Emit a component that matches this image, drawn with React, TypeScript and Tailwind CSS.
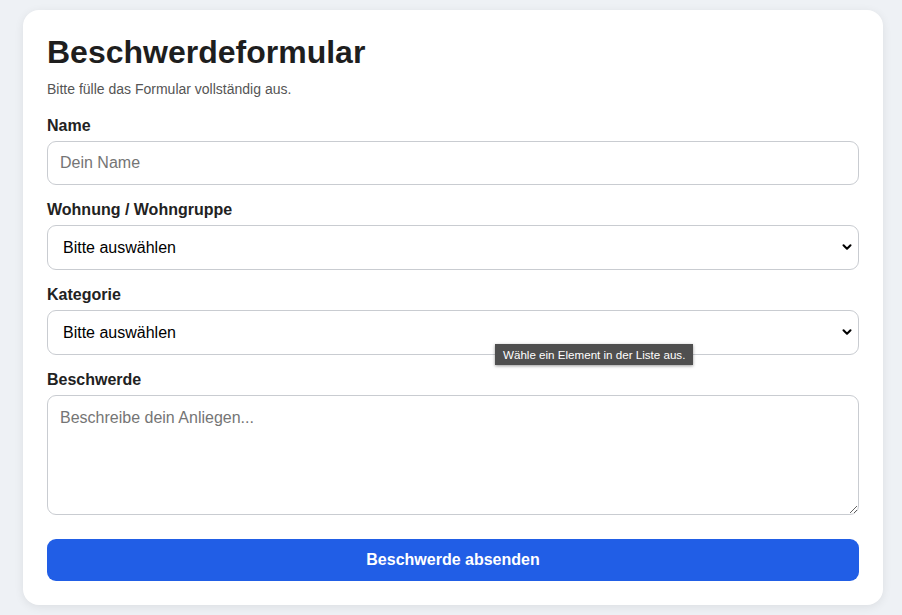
import { ChevronDown } from 'lucide-react';

const font = { fontFamily: '"Liberation Sans", Arial, sans-serif' };

// Select mit eigenem Pfeil
function SelectField({ label }: { label: string }) {
  return (
    <div className="mt-[15px]">
      <label className="block text-[16px] font-bold leading-[20px] text-[#222]">{label}</label>
      <div className="relative mt-[5px]">
        <select className="h-[45px] w-full appearance-none rounded-[9px] border border-[#c9ccd1] bg-white pl-[15px] text-[16px] text-black outline-none">
          <option>Bitte auswählen</option>
        </select>
        <ChevronDown className="pointer-events-none absolute right-[5px] top-[15px] h-[14px] w-[14px] text-black" strokeWidth={3.5} />
      </div>
    </div>
  );
}

export default function App() {
  return (
    <div className="min-h-[615px] bg-[#eef1f5] pt-[10px] pb-[10px]" style={font}>
      <div className="ml-[23px] w-[860px] rounded-[16px] bg-white p-[24px] shadow-[0_2px_10px_rgba(0,0,0,0.08)]">
        <h1 className="text-[32px] font-bold leading-[37px] text-[#1e1e1e]">Beschwerdeformular</h1>
        <p className="mt-[10px] text-[14px] leading-[16px] text-[#555]">Bitte fülle das Formular vollständig aus.</p>

        <div className="mt-[19px]">
          <label className="block text-[16px] font-bold leading-[20px] text-[#222]">Name</label>
          <input
            placeholder="Dein Name"
            className="mt-[5px] h-[44px] w-full rounded-[9px] border border-[#c9ccd1] px-[12px] text-[16px] outline-none placeholder:text-[#757575]"
          />
        </div>

        <div className="mt-[1px]">
          <SelectField label="Wohnung / Wohngruppe" />
        </div>

        <div className="relative">
          <SelectField label="Kategorie" />
          {/* Validierungs-Tooltip */}
          <div className="absolute left-[448px] top-[59px] bg-[#4f4f4f] px-[8px] py-[3px] text-[11.6px] leading-[15px] text-white shadow-[0_1px_3px_rgba(0,0,0,0.4)]">
            Wähle ein Element in der Liste aus.
          </div>
        </div>

        <div className="mt-[15px]">
          <label className="block text-[16px] font-bold leading-[20px] text-[#222]">Beschwerde</label>
          <textarea
            placeholder="Beschreibe dein Anliegen..."
            className="mt-[5px] block h-[120px] w-full rounded-[9px] border border-[#c9ccd1] px-[12px] py-[10px] text-[16px] outline-none placeholder:text-[#757575]"
          />
        </div>

        <button className="mt-[24px] h-[42px] w-full rounded-[9px] bg-[#215ee6] text-[16px] font-bold text-white">
          Beschwerde absenden
        </button>
      </div>
    </div>
  );
}
